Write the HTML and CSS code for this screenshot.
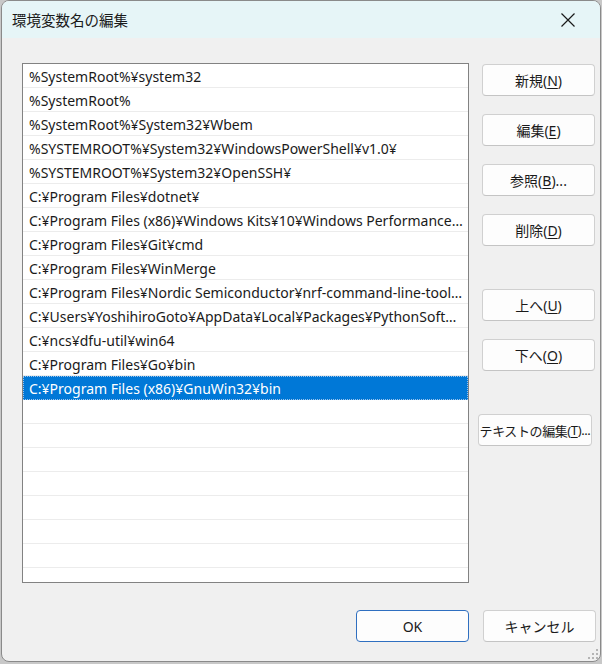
FILE: index.html
```html
<!DOCTYPE html>
<html lang="ja">
<head>
<meta charset="utf-8">
<title>環境変数名の編集</title>
<link rel="stylesheet" href="styles.css">
</head>
<body>
<div class="window">
  <div class="titlebar">
    <span class="title">環境変数名の編集</span>
    <button class="close" aria-label="閉じる">
      <svg width="16" height="16" viewBox="0 0 16 16"><path d="M1.5 1.5 L14.5 14.5 M14.5 1.5 L1.5 14.5" stroke="#1a1a1a" stroke-width="1.2" fill="none"/></svg>
    </button>
  </div>
  <div class="body">
    <div class="main">
      <div class="list">
        <div class="row">%SystemRoot%¥system32</div>
        <div class="row">%SystemRoot%</div>
        <div class="row">%SystemRoot%¥System32¥Wbem</div>
        <div class="row">%SYSTEMROOT%¥System32¥WindowsPowerShell¥v1.0¥</div>
        <div class="row">%SYSTEMROOT%¥System32¥OpenSSH¥</div>
        <div class="row">C:¥Program Files¥dotnet¥</div>
        <div class="row">C:¥Program Files (x86)¥Windows Kits¥10¥Windows Performance Toolkit¥</div>
        <div class="row">C:¥Program Files¥Git¥cmd</div>
        <div class="row">C:¥Program Files¥WinMerge</div>
        <div class="row">C:¥Program Files¥Nordic Semiconductor¥nrf-command-line-tools¥bin¥</div>
        <div class="row">C:¥Users¥YoshihiroGoto¥AppData¥Local¥Packages¥PythonSoftwareFoundation.Python.3.11</div>
        <div class="row">C:¥ncs¥dfu-util¥win64</div>
        <div class="row">C:¥Program Files¥Go¥bin</div>
        <div class="row selected">C:¥Program Files (x86)¥GnuWin32¥bin</div>
        <div class="row"></div>
        <div class="row"></div>
        <div class="row"></div>
        <div class="row"></div>
        <div class="row"></div>
        <div class="row"></div>
        <div class="row"></div>
        <div class="row"></div>
      </div>
      <div class="side">
        <button class="btn">新規(<u>N</u>)</button>
        <button class="btn gap-s">編集(<u>E</u>)</button>
        <button class="btn gap-s">参照(<u>B</u>)...</button>
        <button class="btn gap-s">削除(<u>D</u>)</button>
        <button class="btn gap-l">上へ(<u>U</u>)</button>
        <button class="btn gap-s">下へ(<u>O</u>)</button>
        <button class="btn wide gap-l">テキストの編集(<u>T</u>)...</button>
      </div>
    </div>
    <div class="footer">
      <button class="btn default">OK</button>
      <button class="btn">キャンセル</button>
    </div>
    <div class="grip">
      <svg width="10" height="10" viewBox="0 0 10 10" fill="#b4b4b4">
        <rect x="8" y="0" width="2" height="2"/>
        <rect x="4" y="4" width="2" height="2"/><rect x="8" y="4" width="2" height="2"/>
        <rect x="0" y="8" width="2" height="2"/><rect x="4" y="8" width="2" height="2"/><rect x="8" y="8" width="2" height="2"/>
      </svg>
    </div>
  </div>
</div>
</body>
</html>
```
FILE: styles.css
```css
html, body {
  margin: 0;
  padding: 0;
}

body {
  background: #c8c8c8;
  font-family: "Noto Sans", "Noto Sans CJK JP", sans-serif;
  font-size: 14px;
  color: #1a1a1a;
  width: 602px;
  height: 664px;
  overflow: hidden;
}

.window {
  box-sizing: border-box;
  width: 600px;
  height: 662px;
  margin-left: 1px;
  border: 1px solid #8a8a8a;
  border-radius: 8px;
  background: #f0f0f0;
  overflow: hidden;
  display: flex;
  flex-direction: column;
}

.titlebar {
  height: 37px;
  background: #e6f5f7;
  display: flex;
  align-items: center;
  justify-content: space-between;
  padding-left: 10px;
  flex-shrink: 0;
}

.title {
  font-family: "Noto Sans CJK JP", sans-serif;
  font-size: 14.5px;
  color: #1a1a1a;
}

.close {
  border: 0;
  background: transparent;
  width: 46px;
  height: 37px;
  display: flex;
  align-items: center;
  justify-content: center;
  padding: 0 10px 0 0;
  margin-right: 4px;
}

.body {
  position: relative;
  flex: 1;
  padding: 25px 0 0 20px;
}

.main {
  display: flex;
  align-items: flex-start;
}

.list {
  box-sizing: border-box;
  width: 447px;
  height: 520px;
  background: #ffffff;
  border: 1px solid #828282;
  overflow: hidden;
}

.row {
  box-sizing: border-box;
  height: 24px;
  padding: 2px 4px 0 6px;
  line-height: 21px;
  border-bottom: 1px solid #ececec;
  white-space: nowrap;
  overflow: hidden;
  text-overflow: ellipsis;
  color: #1a1a1a;
}

.row.selected {
  background: #0078d7;
  color: #ffffff;
  border-bottom: 1px dotted #c4dcf4;
  outline: 1px dotted #9cc4ec;
  outline-offset: -1px;
}

.side {
  display: flex;
  flex-direction: column;
  margin-left: 13px;
  padding-top: 1px;
}

.btn {
  box-sizing: border-box;
  width: 113px;
  height: 32px;
  background: #fdfdfd;
  border: 1px solid #d0d0d0;
  border-bottom-color: #c4c4c4;
  border-radius: 4px;
  font-family: "Noto Sans", "Noto Sans CJK JP", sans-serif;
  font-size: 14px;
  color: #1a1a1a;
  padding: 0;
  display: flex;
  align-items: center;
  justify-content: center;
  white-space: nowrap;
}

.btn u {
  text-underline-offset: 2px;
}

.gap-s {
  margin-top: 18px;
}

.gap-l {
  margin-top: 43px;
}

.wide {
  width: 114px;
  margin-left: -4px;
  font-size: 13px;
  letter-spacing: -0.4px;
}

.footer {
  display: flex;
  justify-content: flex-end;
  gap: 14px;
  margin-top: 27px;
  padding-right: 4px;
}

.btn.default {
  border: 1px solid #2f6fc0;
}

.grip {
  position: absolute;
  right: 2px;
  bottom: 2px;
  width: 10px;
  height: 10px;
  line-height: 0;
}
```
